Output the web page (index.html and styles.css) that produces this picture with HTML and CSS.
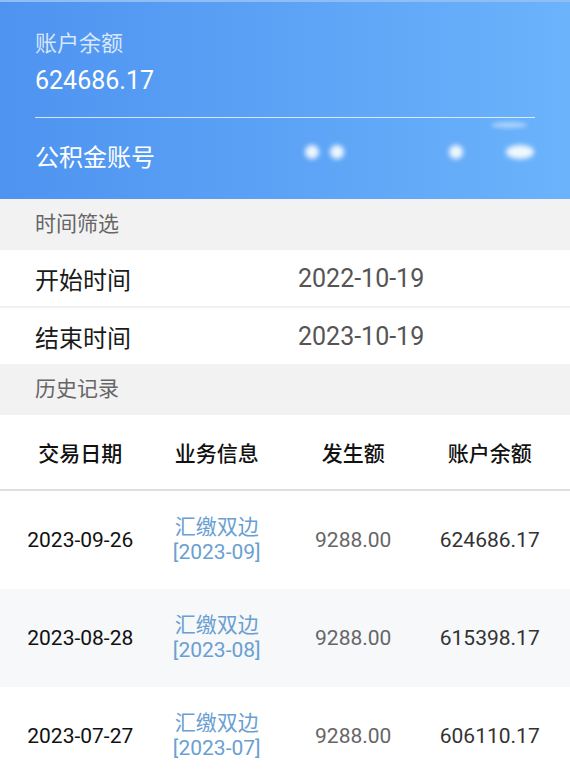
FILE: index.html
```html
<!DOCTYPE html>
<html lang="zh-CN">
<head>
    <meta charset="UTF-8">
    <meta name="viewport" content="width=device-width, initial-scale=1.0">
    <title>公积金账户</title>
    <link rel="stylesheet" href="styles.css">
</head>
<body>
    <div class="account">
        <div class="account-label">账户余额</div>
        <div class="account-amount">624686.17</div>
        <div class="account-line"></div>
        <div class="account-row">
            <span class="account-name">公积金账号</span>
            <span class="mask">
                <span class="dot"></span>
                <span class="dot dot-near"></span>
                <span class="dot dot-far"></span>
                <span class="dot dot-wide"></span>
            </span>
            <span class="glare"></span>
        </div>
    </div>

    <div class="section">时间筛选</div>
    <div class="field">
        <span class="field-name">开始时间</span>
        <span class="field-value">2022-10-19</span>
    </div>
    <div class="field">
        <span class="field-name">结束时间</span>
        <span class="field-value">2023-10-19</span>
    </div>

    <div class="section">历史记录</div>
    <div class="records">
        <div class="records-head">
            <span>交易日期</span>
            <span>业务信息</span>
            <span>发生额</span>
            <span>账户余额</span>
        </div>
        <div class="record">
            <span class="date">2023-09-26</span>
            <span class="info">汇缴双边<br>[2023-09]</span>
            <span class="money">9288.00</span>
            <span class="balance">624686.17</span>
        </div>
        <div class="record odd">
            <span class="date">2023-08-28</span>
            <span class="info">汇缴双边<br>[2023-08]</span>
            <span class="money">9288.00</span>
            <span class="balance">615398.17</span>
        </div>
        <div class="record">
            <span class="date">2023-07-27</span>
            <span class="info">汇缴双边<br>[2023-07]</span>
            <span class="money">9288.00</span>
            <span class="balance">606110.17</span>
        </div>
    </div>
</body>
</html>
```

FILE: styles.css
```css
body {
    margin: 0;
    font-family: Roboto, "Noto Sans CJK SC", sans-serif;
    background-color: #ffffff;
    color: #222;
    overflow: hidden;
}
.account {
    height: 199px;
    box-sizing: border-box;
    padding: 28px 35px 0;
    background: linear-gradient(90deg, #4e93f0 0%, #5ca3f6 50%, #6bb3fb 100%);
    border-top: 2px solid #8cc0f5;
    color: #fff;
}
.account-label {
    font-size: 22px;
    line-height: 28px;
    color: rgba(255, 255, 255, 0.78);
}
.account-amount {
    margin-top: 8px;
    font-size: 25px;
    line-height: 30px;
}
.account-line {
    margin-top: 21px;
    height: 1px;
    background: rgba(255, 255, 255, 0.75);
}
.account-row {
    position: relative;
    display: flex;
    align-items: center;
    height: 74px;
}
.account-name {
    flex-shrink: 0;
    white-space: nowrap;
    font-size: 24px;
}
.mask {
    display: flex;
    align-items: center;
    margin-left: 150px;
    margin-top: -6px;
}
.dot {
    flex-shrink: 0;
    width: 14px;
    height: 14px;
    border-radius: 50%;
    background: #fff;
    filter: blur(2.5px);
    opacity: 0.9;
}
.dot-near {
    margin-left: 11px;
}
.dot-far {
    margin-left: 105px;
}
.dot-wide {
    width: 28px;
    margin-left: 43px;
}
.glare {
    position: absolute;
    right: 8px;
    top: 4px;
    width: 36px;
    height: 6px;
    border-radius: 50%;
    background: rgba(255, 255, 255, 0.45);
    filter: blur(2px);
}
.section {
    height: 51px;
    line-height: 51px;
    padding-left: 35px;
    background: #f2f2f2;
    color: #666;
    font-size: 21px;
}
.field {
    display: flex;
    align-items: center;
    height: 56px;
    padding-left: 35px;
    background: #fff;
    font-size: 24px;
}
.field + .field {
    border-top: 2px solid #f0f0f0;
}
.field-name {
    width: 263px;
    color: #1a1a1a;
}
.field-value {
    font-size: 25px;
    color: #555;
}
.records {
    padding: 0 12px;
}
.records-head,
.record {
    display: grid;
    grid-template-columns: repeat(4, 1fr);
    align-items: center;
    text-align: center;
    margin: 0 -12px;
    padding: 0 12px;
}
.records-head {
    height: 74px;
    border-bottom: 2px solid #dedede;
    font-size: 21px;
    font-weight: 500;
    color: #111;
}
.record {
    height: 98px;
    font-size: 21px;
}
.record.odd {
    background: #f6f8fa;
}
.date {
    color: #111;
}
.info {
    color: #6a9fd2;
    line-height: 25px;
}
.money {
    color: #666;
}
.balance {
    color: #333;
}
```
